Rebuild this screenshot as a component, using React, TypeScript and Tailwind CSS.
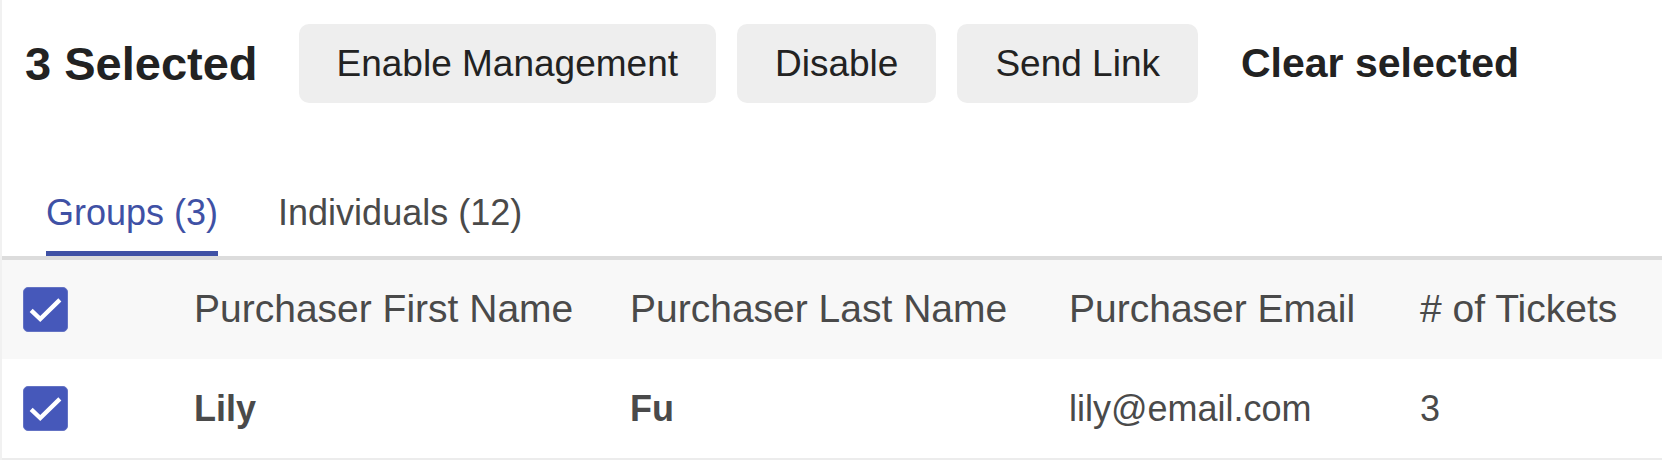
import { useState } from 'react';

type Row = {
  id: number;
  first: string;
  last: string;
  email: string;
  tickets: number;
};

const ROWS: Row[] = [{ id: 1, first: 'Lily', last: 'Fu', email: 'lily@email.com', tickets: 3 }];

const COLS = 'grid grid-cols-[192px_436px_439px_351px_1fr]';

function Checkbox({ checked }: { checked: boolean }) {
  return (
    <span className="flex h-[45px] w-[45px] items-center justify-center rounded-[5px] border border-[#6473c4] bg-[#4658ba]">
      {checked && (
        <svg viewBox="0 0 45 45" className="h-[45px] w-[45px]">
          <path d="M7.5 23.5 L17 32.5 L37.5 12.5" fill="none" stroke="#fff" strokeWidth="4.6" />
        </svg>
      )}
    </span>
  );
}

export default function App() {
  const [tab, setTab] = useState<'groups' | 'individuals'>('groups');

  return (
    <div className="h-[460px] w-full overflow-hidden border-l-2 border-[#f1f1f1] bg-white font-['Liberation_Sans',Arial,sans-serif]">
      <div className="flex h-[79px] items-center pl-[23px] mt-[24px]">
        <h1 className="text-[47px] font-bold leading-none text-[#222]">3 Selected</h1>
        <div className="ml-[41px] flex gap-[21px]">
          {['Enable Management', 'Disable', 'Send Link'].map((label) => (
            <button
              key={label}
              className="h-[79px] rounded-[10px] bg-[#eeeeee] px-[38px] text-[37px] leading-none text-[#222]"
            >
              {label}
            </button>
          ))}
        </div>
        <button className="ml-[43px] text-[41px] font-bold leading-none text-[#222]">Clear selected</button>
      </div>

      <div className="mt-[89px] flex gap-[60px] border-b-4 border-[#dcdcdc] pl-[44px]">
        <button
          onClick={() => setTab('groups')}
          className={
            tab === 'groups'
              ? 'border-b-[5px] border-[#3f51a5] pb-[17px] text-[36px] leading-[42px] text-[#3f51a5]'
              : 'border-b-[5px] border-transparent pb-[17px] text-[36px] leading-[42px] text-[#4a4a4a]'
          }
        >
          Groups (3)
        </button>
        <button
          onClick={() => setTab('individuals')}
          className={
            tab === 'individuals'
              ? 'border-b-[5px] border-[#3f51a5] pb-[17px] text-[36px] leading-[42px] text-[#3f51a5]'
              : 'border-b-[5px] border-transparent pb-[17px] text-[36px] leading-[42px] text-[#4a4a4a]'
          }
        >
          Individuals (12)
        </button>
      </div>

      <div className={`${COLS} h-[99px] items-center bg-[#f8f8f8] text-[39px] text-[#4a4a4a]`}>
        <div className="pl-[21px]">
          <Checkbox checked />
        </div>
        <div className="whitespace-nowrap">Purchaser First Name</div>
        <div className="whitespace-nowrap">Purchaser Last Name</div>
        <div className="whitespace-nowrap">Purchaser Email</div>
        <div className="whitespace-nowrap"># of Tickets</div>
      </div>

      {ROWS.map((r) => (
        <div
          key={r.id}
          className={`${COLS} h-[101px] items-center border-b-2 border-[#ececec] text-[36px] text-[#4a4a4a]`}
        >
          <div className="pl-[21px]">
            <Checkbox checked />
          </div>
          <div className="font-bold">{r.first}</div>
          <div className="font-bold">{r.last}</div>
          <div>{r.email}</div>
          <div>{r.tickets}</div>
        </div>
      ))}
    </div>
  );
}
